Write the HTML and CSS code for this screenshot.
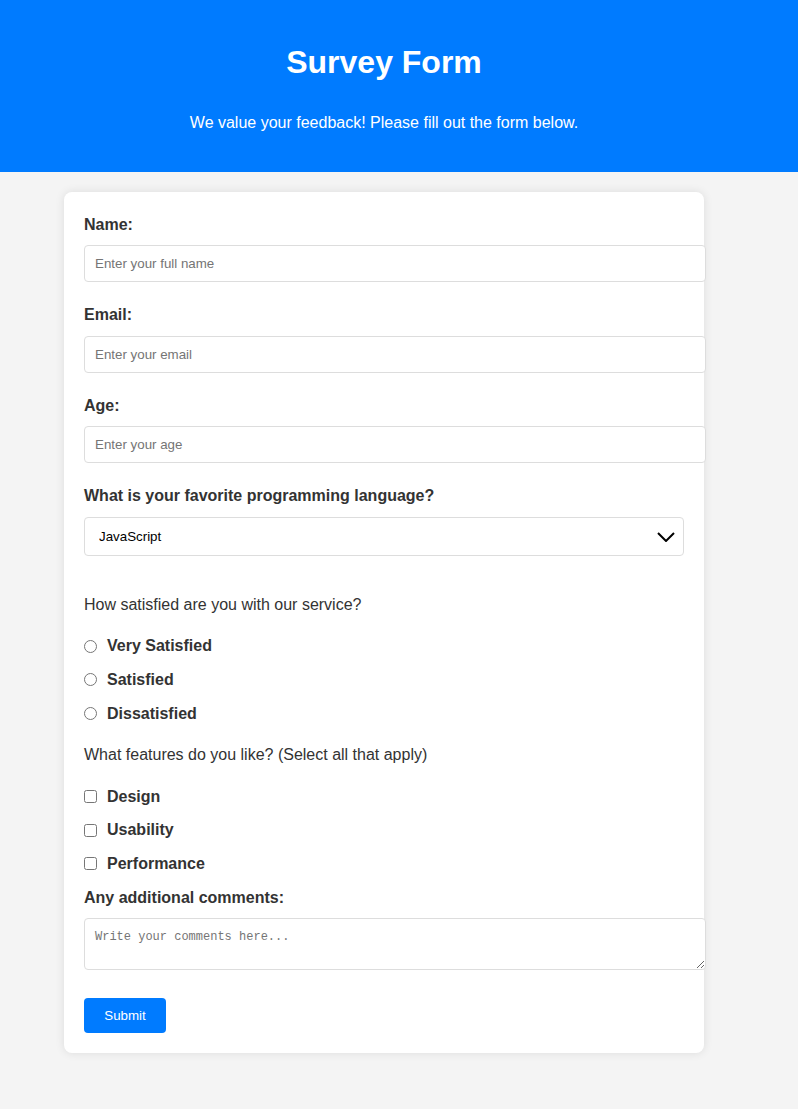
FILE: index.html
```html
<!DOCTYPE html>
<html lang="en">
<head>
<meta charset="utf-8">
<title>Survey Form</title>
<link rel="stylesheet" href="styles.css">
</head>
<body>
<header class="header">
  <div class="header-inner">
    <h1 class="title">Survey Form</h1>
    <p class="subtitle">We value your feedback! Please fill out the form below.</p>
  </div>
</header>
<main class="main">
  <form class="card">
    <label class="field-label" for="name">Name:</label>
    <input class="text-input" id="name" type="text" placeholder="Enter your full name">

    <label class="field-label" for="email">Email:</label>
    <input class="text-input" id="email" type="email" placeholder="Enter your email">

    <label class="field-label" for="age">Age:</label>
    <input class="text-input" id="age" type="number" placeholder="Enter your age">

    <label class="field-label" for="lang">What is your favorite programming language?</label>
    <div class="select-wrap">
      <select class="select" id="lang">
        <option>JavaScript</option>
        <option>Python</option>
        <option>Java</option>
        <option>C++</option>
      </select>
      <svg class="chevron" width="18" height="10" viewBox="0 0 18 10"><path d="M1 1 L9 9 L17 1" fill="none" stroke="#000" stroke-width="2"/></svg>
    </div>

    <p class="question">How satisfied are you with our service?</p>
    <label class="option"><input class="radio" type="radio" name="sat"> Very Satisfied</label>
    <label class="option"><input class="radio" type="radio" name="sat"> Satisfied</label>
    <label class="option"><input class="radio" type="radio" name="sat"> Dissatisfied</label>

    <p class="question">What features do you like? (Select all that apply)</p>
    <label class="option"><input class="checkbox" type="checkbox"> Design</label>
    <label class="option"><input class="checkbox" type="checkbox"> Usability</label>
    <label class="option"><input class="checkbox" type="checkbox"> Performance</label>

    <label class="field-label" for="comments">Any additional comments:</label>
    <textarea class="textarea" id="comments" placeholder="Write your comments here..."></textarea>

    <button class="submit" type="submit">Submit</button>
  </form>
</main>
</body>
</html>
```
FILE: styles.css
```css
html, body {
  margin: 0;
  padding: 0;
}

body {
  font-family: "Liberation Sans", Arial, sans-serif;
  background: #f4f4f4;
  color: #333;
  line-height: 1.6;
}

.header {
  background: #007bff;
  color: #fff;
  padding: 22px 0 40px;
  line-height: normal;
}

.header-inner {
  width: 768px;
  text-align: center;
}

.title {
  font-size: 32px;
  font-weight: bold;
  margin: 21.5px 0 33px;
}

.subtitle {
  font-size: 16px;
  margin: 0;
}

.main {
  width: 768px;
  padding: 20px 0;
}

.card {
  display: block;
  width: 600px;
  margin: 0 auto;
  padding: 20px;
  background: #fff;
  border-radius: 8px;
  box-shadow: 0 0 10px rgba(0, 0, 0, 0.1);
}

.field-label {
  display: block;
  font-weight: bold;
  font-size: 16px;
  margin-bottom: 8px;
}

.text-input {
  display: block;
  box-sizing: border-box;
  width: 622px;
  height: 37px;
  padding: 10px;
  margin: 0 0 20px;
  border: 1px solid #ddd;
  border-radius: 4px;
  font-family: "Liberation Sans", Arial, sans-serif;
  font-size: 13.333px;
  color: #000;
  background: #fff;
}

.text-input::placeholder,
.textarea::placeholder {
  color: #757575;
}

.select-wrap {
  position: relative;
  width: 600px;
  height: 39px;
  margin-bottom: 36px;
}

.select {
  -webkit-appearance: none;
  appearance: none;
  display: block;
  box-sizing: border-box;
  width: 600px;
  height: 39px;
  padding: 0 40px 0 14px;
  border: 1px solid #ddd;
  border-radius: 4px;
  background: #fff;
  font-family: "Liberation Sans", Arial, sans-serif;
  font-size: 13.333px;
  color: #000;
}

.chevron {
  position: absolute;
  right: 9px;
  top: 15px;
  pointer-events: none;
}

.question {
  margin: 16px 0;
  font-size: 16px;
}

.option {
  display: flex;
  align-items: center;
  font-weight: bold;
  font-size: 16px;
  margin-bottom: 8px;
  height: 25.6px;
}

.radio,
.checkbox {
  width: 13px;
  height: 13px;
  margin: 0 10px 0 0;
  flex: none;
}

.textarea {
  display: block;
  box-sizing: border-box;
  width: 622px;
  height: 52px;
  padding: 10px;
  margin: 0 0 28px;
  border: 1px solid #ddd;
  border-radius: 4px;
  font-family: "Liberation Mono", "Courier New", monospace;
  font-size: 12px;
  line-height: 17px;
  resize: vertical;
}

.submit {
  display: block;
  box-sizing: border-box;
  width: 82px;
  height: 35px;
  padding: 0;
  border: none;
  border-radius: 4px;
  background: #007bff;
  color: #fff;
  font-family: "Liberation Sans", Arial, sans-serif;
  font-size: 13.333px;
  line-height: normal;
  text-align: center;
  cursor: pointer;
}
```
